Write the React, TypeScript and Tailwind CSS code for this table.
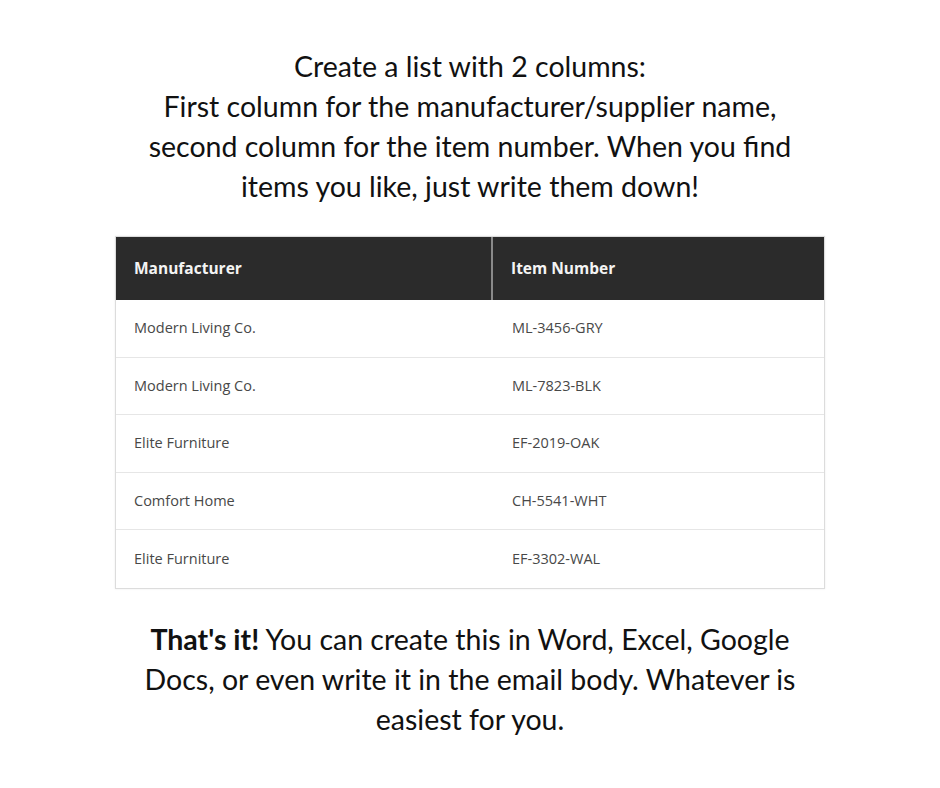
import React from "react";

const rows = [
  ["Modern Living Co.", "ML-3456-GRY"],
  ["Modern Living Co.", "ML-7823-BLK"],
  ["Elite Furniture", "EF-2019-OAK"],
  ["Comfort Home", "CH-5541-WHT"],
  ["Elite Furniture", "EF-3302-WAL"],
];

export default function App() {
  return (
    <div className="w-[940px] h-[788px] bg-white flex flex-col items-center pt-[46px]" style={{ fontFamily: "Lato, 'Open Sans', sans-serif" }}>
      <p className="text-[28.5px] leading-[40px] text-[#111] text-center whitespace-nowrap">
        Create a list with 2 columns:
        <br />
        First column for the manufacturer/supplier name,
        <br />
        second column for the item number. When you find
        <br />
        items you like, just write them down!
      </p>
      <div className="mt-[30px] w-[710px] border border-[#dcdcdc] shadow-[0_0_2px_rgba(0,0,0,0.08)]" style={{ fontFamily: "'Open Sans', 'Noto Sans', sans-serif" }}>
        <div className="flex h-[63px] bg-[#2b2b2b] text-[#f4f4f4] text-[15.5px] font-bold">
          <div className="w-[377px] flex items-center pl-[18px] border-r-2 border-[#8a8a8a]">Manufacturer</div>
          <div className="flex-1 flex items-center pl-[18px]">Item Number</div>
        </div>
        {rows.map((r, i) => (
          <div key={i} className={`flex h-[57.5px] text-[14.5px] text-[#484848] ${i < rows.length - 1 ? "border-b border-[#e6e6e6]" : ""}`}>
            <div className="w-[377px] flex items-center pl-[18px]">{r[0]}</div>
            <div className="flex-1 flex items-center pl-[19px]">{r[1]}</div>
          </div>
        ))}
      </div>
      <p className="mt-[30px] text-[28.5px] leading-[40px] text-[#111] text-center whitespace-nowrap">
        <span className="font-bold">That's it!</span> You can create this in Word, Excel, Google
        <br />
        Docs, or even write it in the email body. Whatever is
        <br />
        easiest for you.
      </p>
    </div>
  );
}
